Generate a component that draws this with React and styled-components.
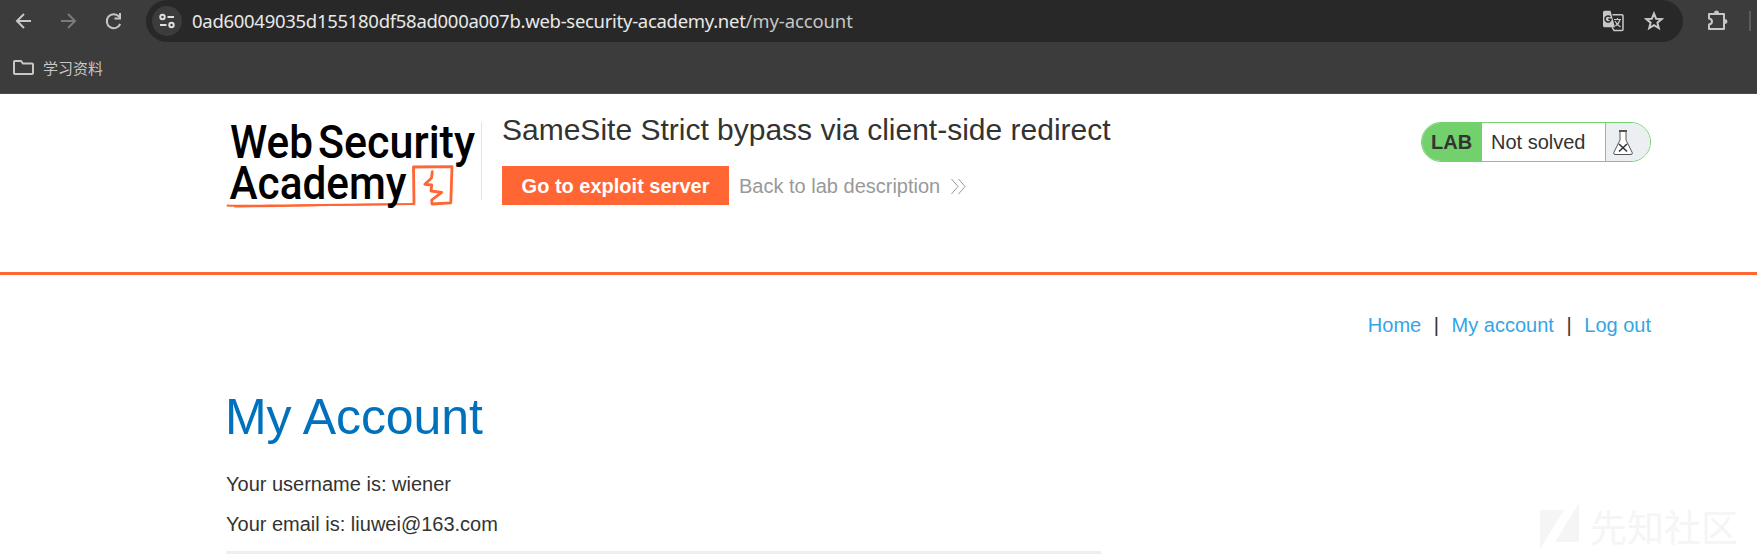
import React from "react";
import styled, { createGlobalStyle } from "styled-components";

const Global = createGlobalStyle`
  * { box-sizing: border-box; }
  body { margin: 0; background: #fff; overflow: hidden; }
`;

const Page = styled.div`
  height: 554px;
  overflow: hidden;
  color: #333332;
  font: 20px/25px "Liberation Sans", Arial, sans-serif;
`;

const BrowserChrome = styled.header`
  height: 94px;
  background: #3c3c3c;
  border-bottom: 1px solid #4b4b4b;
`;

const Toolbar = styled.div`
  display: flex;
  align-items: center;
  height: 42px;
  padding-left: 14px;
`;

const NavButtons = styled.div`
  display: flex;
  gap: 25px;
  width: 132px;
`;

const Icon = styled.svg`
  display: block;
  flex: none;
  width: ${(p) => p.$w || 20}px;
  height: ${(p) => p.$h || p.$w || 20}px;
  fill: none;
  stroke: ${(p) => p.$color || "#c7c7c7"};
  stroke-width: ${(p) => p.$stroke || 2};
`;

const Omnibox = styled.div`
  display: flex;
  align-items: center;
  width: 1537px;
  height: 42px;
  padding: 0 19px 0 6px;
  border-radius: 21px;
  background: #282828;
`;

const SiteInfo = styled.div`
  display: grid;
  place-items: center;
  width: 30px;
  height: 30px;
  margin-right: 10px;
  border-radius: 50%;
  background: #3c3c3c;
`;

const Address = styled.div`
  flex: 1;
  color: #c7c7c7;
  font: 18.5px/26px "Noto Sans", "Open Sans", sans-serif;
  letter-spacing: -0.12px;
  white-space: nowrap;
`;

const Domain = styled.span`
  color: #e8e8e8;
  letter-spacing: -0.29px;
`;

const PageActions = styled.div`
  display: flex;
  align-items: center;
  gap: 20px;
`;

const Extensions = styled.div`
  display: flex;
  align-items: center;
  gap: 20px;
  padding-left: 23px;
`;

const Separator = styled.div`
  width: 2px;
  height: 20px;
  background: #5c5c5c;
`;

const Bookmarks = styled.div`
  display: flex;
  align-items: center;
  gap: 9px;
  height: 51px;
  padding: 0 0 0 13px;
  color: #c7c7c7;
  font: 15px/20px "Noto Sans CJK SC", sans-serif;
`;

const LabHeader = styled.section`
  display: flex;
  height: 181px;
  padding-left: 226px;
  border-bottom: 3px solid #ff6633;
`;

const Logo = styled.svg`
  width: 255px;
  height: 100px;
  margin-top: 20px;
  flex: none;
  overflow: visible;
`;

const TitleBlock = styled.div`
  width: 939px;
  margin: 28px 0 0;
  padding-left: 20px;
  flex: none;
`;

const Divider = styled.div`
  width: 1px;
  height: 78px;
  margin-top: 28px;
  background: #e3e3e3;
`;

const Title = styled.h2`
  margin: -11px 0 0;
  font-size: 30px;
  font-weight: 400;
  line-height: 37px;
  white-space: nowrap;
`;

const Actions = styled.div`
  display: flex;
  align-items: center;
  margin-top: 18px;
`;

const ExploitButton = styled.a`
  display: grid;
  place-items: center;
  width: 227px;
  height: 39px;
  padding-top: 1px;
  margin-right: 10px;
  background: #ff6633;
  color: #fff;
  font-weight: 700;
  white-space: nowrap;
`;

const BackLink = styled.a`
  display: flex;
  align-items: center;
  gap: 11px;
  padding-top: 2px;
  color: #999;
  white-space: nowrap;
`;

const Status = styled.div`
  display: flex;
  width: 230px;
  height: 40px;
  margin-top: 28px;
  overflow: hidden;
  border: 1px solid #75d170;
  border-radius: 20px;
  line-height: 39px;
`;

const StatusLabel = styled.strong`
  width: 60px;
  padding-left: 9px;
  background: #72d16d;
`;

const StatusText = styled.span`
  width: 124px;
  padding-left: 9px;
  border-right: 1px solid #75d170;
`;

const StatusIcon = styled.span`
  flex: 1;
  padding: 7px 0 0 7px;
  background: #ebeff2;
`;

const Content = styled.main`
  width: 1425px;
  margin-left: 226px;
  padding-top: 38px;
`;

const AccountNav = styled.nav`
  display: flex;
  justify-content: flex-end;
  gap: 12.6px;
`;

const NavLink = styled.a`
  color: #33a6e6;
`;

const Heading = styled.h1`
  margin: 48px 0 0 -1px;
  color: #0071bc;
  font-size: 50px;
  font-weight: 400;
  line-height: 62px;
  letter-spacing: -0.05px;
`;

const Details = styled.div`
  display: flex;
  flex-direction: column;
  gap: 15px;
  width: 875px;
  height: 103px;
  padding-top: 24px;
`;

const Detail = styled.p`
  margin: 0;
`;

const FormRule = styled.div`
  width: 875px;
  height: 3px;
  background: #ebefef;
`;

const Watermark = styled.div`
  position: absolute;
  left: 1540px;
  top: 502px;
  display: flex;
  align-items: center;
  gap: 11px;
  color: #f5f5f5;
  font: 37px/48px "Noto Sans CJK SC", sans-serif;
`;

function SecurityLogo() {
  return (
    <Logo viewBox="0 0 255 100">
      <g fill="#000" fontFamily="Roboto, sans-serif" fontWeight="500" fontSize="47">
        <text x="4" y="44" textLength="83" lengthAdjust="spacingAndGlyphs">Web</text>
        <text x="92" y="44" textLength="157" lengthAdjust="spacingAndGlyphs">Security</text>
      </g>
      <g fill="none" stroke="#ff6633" strokeLinecap="round" strokeLinejoin="round">
        <path d="M1.500 91.500C10 92.500 40 91.500 70 91.200S140 90.500 188 90" strokeWidth="2" />
        <path d="M9 92.500C50 92.500 120 90.500 160 90.300" strokeWidth="1.800" />
        <path d="M188 89.500L187.500 53 226 52.700 224.800 88.800 206 90 205.700 86 215.700 78.300 205 77 205.700 71 198.800 70.300 205.500 64 206.300 57.700" strokeWidth="2.800" />
      </g>
      <text x="3.500" y="84.700" fill="#000" fontFamily="Roboto, sans-serif" fontWeight="500" fontSize="47" textLength="177" lengthAdjust="spacingAndGlyphs">Academy</text>
    </Logo>
  );
}

export default function App() {
  return (
    <Page>
      <Global />
      <BrowserChrome>
        <Toolbar>
          <NavButtons>
            <Icon viewBox="0 0 20 20"><path d="M17 10H3M10 3L3 10l7 7" /></Icon>
            <Icon viewBox="0 0 20 20" $color="#7b7b7b"><path d="M2 10h14M9 3l7 7-7 7" /></Icon>
            <Icon viewBox="0 0 20 20"><path d="M15 5.5A7 7 0 1 0 16.200 13M16 2v5.500h-5.500" /></Icon>
          </NavButtons>
          <Omnibox>
            <SiteInfo>
              <Icon viewBox="0 0 18 18" $w={18} $color="#e0e0e0"><circle cx="4.5" cy="5" r="2.2" /><path d="M9.5 5H16M2 13h6.5" /><circle cx="13.5" cy="13" r="2.2" /></Icon>
            </SiteInfo>
            <Address><Domain>0ad60049035d155180df58ad000a007b.web-security-academy.net</Domain>/my-account</Address>
            <PageActions>
              <Icon viewBox="0 0 22 22" $w={22} $stroke={1.5}>
                <path d="M10.500 4.800h9.500a1 1 0 0 1 1 1V19.500a1 1 0 0 1-1 1h-8L10 17" />
                <path d="M2.500.8h6l4.500 16.500H2.500a1.500 1.500 0 0 1-1.500-1.500V2.300A1.500 1.500 0 0 1 2.500.8Z" fill="#c7c7c7" stroke="none" />
                <path d="M8.300 7A3 3 0 1 0 9 9.300H6.200" stroke="#282828" />
                <path d="M12 9.500h7M15.500 8v1.500M17.800 10c-.8 3-2.500 5-4.500 6M13 11c1.200 2.500 3 4.300 5.500 6" strokeWidth="1.200" />
              </Icon>
              <Icon viewBox="0 0 20 20" $w={20}><path d="M10 2.500l2.100 5.200 5.600.4-4.300 3.600 1.400 5.500-4.800-3-4.800 3 1.400-5.500-4.300-3.600 5.600-.4Z" /></Icon>
            </PageActions>
          </Omnibox>
          <Extensions>
            <Icon viewBox="0 0 23 23" $w={23}>
              <path d="M3 4h15v15H3v-4.500q3-.5 3-3t-3-3Z" strokeLinejoin="round" />
              <path d="M8 3a2.500 2.500 0 0 1 5 0ZM19 9a2.500 2.500 0 0 1 0 5Z" fill="#c7c7c7" stroke="none" />
            </Icon>
            <Separator />
          </Extensions>
        </Toolbar>
        <Bookmarks>
          <Icon viewBox="0 0 21 17" $w={21} $h={17}><path d="M2 2h6l2 2.500h9q1 0 1 1V14q0 1-1 1H2q-1 0-1-1V3q0-1 1-1Z" /></Icon>
          学习资料
        </Bookmarks>
      </BrowserChrome>

      <LabHeader>
        <SecurityLogo />
        <Divider />
        <TitleBlock>
          <Title>SameSite Strict bypass via client-side redirect</Title>
          <Actions>
            <ExploitButton>Go to exploit server</ExploitButton>
            <BackLink>
              Back to lab description
              <Icon viewBox="0 0 15 17" $w={15} $h={17} $stroke={1} $color="#999"><path d="M.5 1L7 8.500.5 16M7.500 1L14 8.500 7.500 16" /></Icon>
            </BackLink>
          </Actions>
        </TitleBlock>
        <Status>
          <StatusLabel>LAB</StatusLabel>
          <StatusText>Not solved</StatusText>
          <StatusIcon>
            <Icon viewBox="0 0 20 26" $w={20} $h={26} $stroke={1} $color="#555">
              <path d="M7 1.500V10L.8 22.500Q.3 24.500 2 24.500h16q1.700 0 1.200-2L13 10V1.500Z" fill="#fff" />
              <path d="M6 1h8" strokeWidth="2" />
              <path d="M6 14l8 7.500M14 14l-8 7.500" stroke="#333" strokeWidth="1.600" />
            </Icon>
          </StatusIcon>
        </Status>
      </LabHeader>

      <Content>
        <AccountNav>
          <NavLink>Home</NavLink>
          <span>|</span>
          <NavLink>My account</NavLink>
          <span>|</span>
          <NavLink>Log out</NavLink>
        </AccountNav>
        <Heading>My Account</Heading>
        <Details>
          <Detail>Your username is: wiener</Detail>
          <Detail>Your email is: liuwei@163.com</Detail>
        </Details>
        <FormRule />
      </Content>

      <Watermark>
        <Icon viewBox="0 0 39 48" $w={39} $h={48}><path d="M0 8h24L0 47ZM39 1v39H15Z" fill="#f5f5f5" stroke="none" /></Icon>
        先知社区
      </Watermark>
    </Page>
  );
}
